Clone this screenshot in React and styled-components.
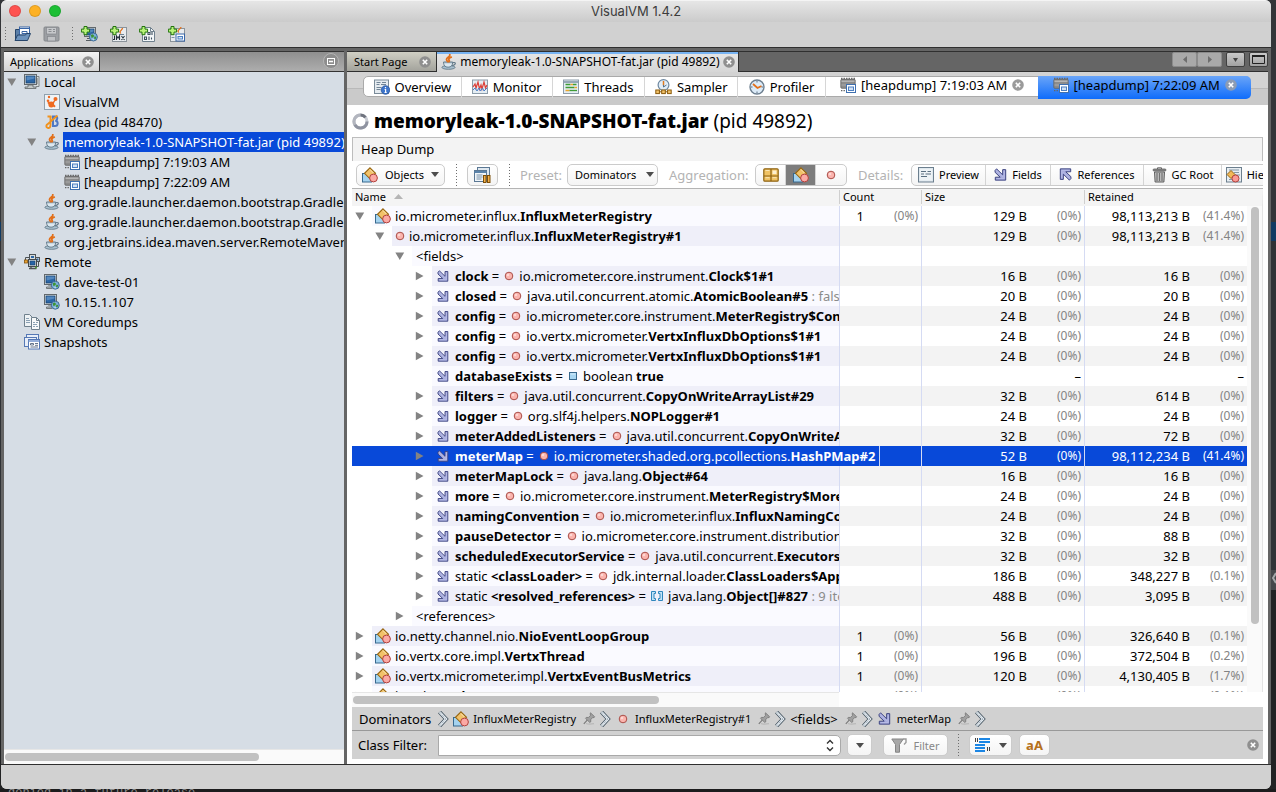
import React from "react";
import styled, { createGlobalStyle, css } from "styled-components";

const GlobalStyle = createGlobalStyle`
  * { box-sizing: border-box; }
  html, body { margin: 0; padding: 0; }
  body {
    font-family: "Noto Sans", "Open Sans", sans-serif;
    font-size: 12px;
    color: #000;
    background: #1b1b1c;
  }
  button, input, select { font: inherit; color: inherit; margin: 0; }
  button { cursor: default; }
`;

/* ---------- icons ---------- */

const Svg = styled.svg`
  display: block;
  flex: none;
`;

const CupIcon = () => (
  <Svg width="16" height="16" viewBox="0 0 16 16">
    <ellipse cx="7.5" cy="13.4" rx="6.6" ry="1.9" fill="#a9c0cf" stroke="#5d7383" strokeWidth=".8" />
    <path d="M2.5 8h9.2c0 3.4-1.6 5.2-4.6 5.2S2.500 11.400 2.500 8z" fill="#dbe8f0" stroke="#5d7686" strokeWidth=".9" />
    <path d="M3.200 8.500h7.800" stroke="#8aa0b0" strokeWidth="1.400" />
    <path d="M11.700 8.700c2.200-.7 3 .4 2.500 1.400-.5 1-1.800 1.400-3 1.500" fill="none" stroke="#5d7686" strokeWidth="1.100" />
    <path d="M8.800.6c.5 2.200-3.300 2.700-3.300 4.800 0 .9.600 1.500 1.200 2.100M10.200 3.200C8.200 4 7.300 4.900 8 6c.4.600.4 1 .1 1.600" fill="none" stroke="#e2701b" strokeWidth="1.800" strokeLinecap="round" />
  </Svg>
);

const Screen = ({ x = 0, y = 0, w = 11, h = 9 }) => (
  <g>
    <rect x={x + 0.5} y={y + 0.5} width={w} height={h} fill="#e3e7e7" stroke="#62686c" />
    <rect x={x + 2} y={y + 2} width={w - 3} height={h - 3} fill="#2c66a5" stroke="#173f6c" strokeWidth=".8" />
    <path d={`M${x + 2.500} ${y + 2.500}h${w - 4}v2l-${w - 4} 2z`} fill="#6f9fd0" opacity=".6" />
  </g>
);

const HostIcon = () => (
  <Svg width="16" height="16" viewBox="0 0 16 16">
    <path d="M10 2.500h5v10H12" fill="#d9dddd" stroke="#7d8284" />
    <path d="M13 5h1M13 7h1M13 9h1" stroke="#777" />
    <Screen x={0} y={0} w={12} h={10} />
    <path d="M4 11h5v2h3v1.500H1V13h3z" fill="#c4c9c9" stroke="#5e6467" strokeWidth=".8" />
  </Svg>
);

const Globe = ({ x, y, r = 4 }) => (
  <g>
    <circle cx={x} cy={y} r={r} fill="#7db0dc" stroke="#38648f" strokeWidth=".9" />
    <path d={`M${x - 2.500} ${y - 2}l2-.8 1.300 1.600-1 1.600-1.800.3zM${x + 1} ${y - 0.500}l2 .3-.9 2.600-1.400-.9z`} fill="#3f9434" />
    <path d={`M${x - 1} ${y + 1.500}l1.500.5-.8 1.500z`} fill="#e9f5e4" />
  </g>
);

const RemoteHostIcon = () => (
  <Svg width="16" height="16" viewBox="0 0 16 16">
    <Screen x={0} y={0} w={12} h={10} />
    <path d="M4 11h4v2H2.500v1.500H8" fill="#bfc4c4" stroke="#5e6467" strokeWidth=".8" />
    <Globe x={11.3} y={11.200} />
  </Svg>
);

const RemoteIcon = () => (
  <Svg width="16" height="16" viewBox="0 0 16 16">
    <path d="M1.500 6V3.500H5M14.500 8v4.500H11" fill="none" stroke="#4b5256" />
    <rect x="0.500" y="6" width="3" height="3" fill="#e6a233" stroke="#85530e" strokeWidth=".8" />
    <rect x="5.500" y=".5" width="6" height="5" fill="#d7dcdc" stroke="#4d5357" />
    <rect x="7" y="2" width="3" height="2" fill="#2c66a5" />
    <rect x="11.500" y="3.500" width="4" height="4" fill="#d7dcdc" stroke="#4d5357" />
    <rect x="12.500" y="4.500" width="2" height="2" fill="#2c66a5" />
    <rect x="4.500" y="5.500" width="8" height="7" fill="#d7dcdc" stroke="#444a4e" />
    <rect x="6" y="7" width="5" height="4" fill="#2864a6" stroke="#173f6c" strokeWidth=".6" />
    <path d="M5 14.500h7.500M7 13v1.500" stroke="#4d5357" strokeWidth="1.400" />
    <path d="M11 13.500h2" stroke="#54a338" strokeWidth="1.400" />
  </Svg>
);

const VisualVmIcon = () => (
  <Svg width="16" height="16" viewBox="0 0 16 16">
    <rect x=".5" y=".5" width="15" height="15" fill="#eef3f7" stroke="#8fa0ae" />
    <g fill="#ee6a22">
      <circle cx="5" cy="3" r="1.200" /><circle cx="4" cy="6.800" r="1.300" /><circle cx="11.500" cy="5" r="2" />
      <circle cx="7.300" cy="10.500" r="2.900" /><circle cx="4.800" cy="8.800" r="1.200" />
      <path d="M8.500 8.500l2.500-3.200.8.600-2 3.600z" /><circle cx="10.300" cy="12.200" r="1.100" />
    </g>
  </Svg>
);

const IdeaIcon = () => (
  <Svg width="16" height="16" viewBox="0 0 16 16">
    <path d="M9 2.500h2.300c2.600 0 2.600 3.600 0 4.200 3.200.2 3.200 5.300-.3 5.300H9z" fill="none" stroke="#4e78c4" strokeWidth="2" />
    <path d="M6.500 2.500v8.500c0 2.400-1.200 3.400-2.800 2.900-1.900-.6-1.900-3.100.2-3.900L13.500 1.500" fill="none" stroke="#f0921e" strokeWidth="1.900" />
    <path d="M3.500 2.500h4" stroke="#f0921e" strokeWidth="1.800" />
  </Svg>
);

const HeapIcon = () => (
  <Svg width="16" height="16" viewBox="0 0 16 16">
    <path d="M1 2V.8h1.500V2h1V.8H5V2h1V.8h1.500V2h1V.8H10V2h1V.8h1.500V2h1V.8H15V3H1z" fill="#6c6c6c" />
    <rect x=".8" y="2.300" width="14.400" height="9" rx="1" fill="#8c8c8c" stroke="#666" strokeWidth=".8" />
    <path d="M1.500 4.200h13" stroke="#c8c8c8" />
    <path d="M1.500 8h6" stroke="#aaa" />
    <path d="M1 13h1.400v1.200H1zM3.500 13h1.400v1.200H3.500z" fill="#666" />
    <rect x="6.500" y="7.500" width="9" height="8" fill="#fff" stroke="#3f6fae" />
    <rect x="8.500" y="10" width="5" height="3.500" fill="#cfe0f4" stroke="#4c7fc2" />
  </Svg>
);

const DocsIcon = () => (
  <Svg width="16" height="16" viewBox="0 0 16 16">
    <path d="M.5.5h5l3 3v9h-8z" fill="#eef2f5" stroke="#6f808d" />
    <path d="M2 4.500h3M2 6.500h4M2 8.500h4" stroke="#8ba1b4" />
    <path d="M7.500 3.500h5l3 3v9h-8z" fill="#f7f9fa" stroke="#6f808d" />
    <path d="M12.500 3.500v3h3" fill="none" stroke="#6f808d" />
    <path d="M9 8.500h2M12 8.500h2M9 10.500h4M9 12.500h2M12 12.500h2" stroke="#8ba1b4" />
  </Svg>
);

const SnapshotsIcon = () => (
  <Svg width="16" height="16" viewBox="0 0 16 16">
    <rect x="2.500" y=".5" width="12" height="9" fill="#e8eef8" stroke="#5578b5" />
    <rect x=".5" y="3.500" width="12" height="9" fill="#e8eef8" stroke="#5578b5" />
    <rect x="4.500" y="5.500" width="11" height="9.500" fill="#fff" stroke="#5578b5" />
    <path d="M4.500 7h11" stroke="#7c9bd1" strokeWidth="1.600" />
    <path d="M6.500 9.500h3v1.500h-3zM11 9.500h3M6.500 13h7.500M11 11.300h3" fill="none" stroke="#54657f" strokeWidth=".9" />
  </Svg>
);

const ClassIcon = () => (
  <Svg width="16" height="16" viewBox="0 0 16 16">
    <rect x=".5" y="6.500" width="9" height="8.500" fill="#a5d3ef" stroke="#38698e" />
    <path d="M8 .8L13.500 6.300 8 11.800 2.500 6.300z" fill="#f2c269" stroke="#97650f" strokeWidth="1.100" />
    <path d="M8 2.500l3.500 3.600" stroke="#fbe5b6" strokeWidth="1" />
    <circle cx="11.500" cy="11" r="3.900" fill="#fba9a4" stroke="#b0423e" strokeWidth="1" />
  </Svg>
);

const InstanceIcon = () => (
  <Svg width="10" height="10" viewBox="0 0 10 10">
    <circle cx="5" cy="5" r="3.800" fill="#fbb4ae" stroke="#a94d47" strokeWidth="1" />
    <circle cx="4" cy="4" r="1.300" fill="#fdd8d4" />
  </Svg>
);

const PrimitiveIcon = () => (
  <Svg width="10" height="10" viewBox="0 0 10 10">
    <rect x="1.500" y="1.500" width="7" height="7" fill="#a9d6f2" stroke="#38698e" />
    <path d="M2.500 3h5" stroke="#d6edfa" />
  </Svg>
);

const ArrayIcon = () => (
  <Svg width="12" height="12" viewBox="0 0 12 12">
    <path d="M.5 1.500h4v2H3v5h1.500v2h-4zM11.500 1.500h-4v2H9v5H7.500v2h4z" fill="#c2e2f7" stroke="#2f86bd" />
  </Svg>
);

const FieldIcon = ({ size = 12, flip }) => (
  <Svg width={size} height={size} viewBox="0 0 12 12">
    <g transform={flip ? "rotate(180 6 6)" : undefined}>
      <path d="M1 2.200L2.400.8 8 6.300V1.500h2.800v9.700H1.200V8.500h4.500L1 4z" fill="#a9aede" stroke="#3a417e" strokeWidth=".9" strokeLinejoin="round" />
      <path d="M2.600 2.400L8.600 8.400M3 9.800h6.400V3" fill="none" stroke="#bcc0ea" strokeWidth=".7" />
    </g>
  </Svg>
);

const PinIcon = () => (
  <Svg width="13" height="13" viewBox="0 0 13 13">
    <path d="M3 11.500c2 .8 5 .7 8 .2" stroke="#b9b9b9" strokeWidth="1.200" fill="none" />
    <path d="M.8 11.800l3.400-3.600" stroke="#777" strokeWidth="1.100" />
    <path d="M7.500.8l4.200 4-.8.9-1.200-.2-2 2.200.1 2-1 .8L2.500 6.300l.9-.9 2 .1 2.100-2.100-.3-1.500z" fill="#a0a0a0" stroke="#747474" strokeWidth=".8" />
  </Svg>
);

const ChevronIcon = () => (
  <Svg width="11" height="16" viewBox="0 0 11 16">
    <path d="M1.500 1l6.500 7-6.500 7" fill="none" stroke="#445460" strokeWidth="4" />
    <path d="M1.500 1l6.500 7-6.500 7" fill="none" stroke="#e9eff4" strokeWidth="2.400" />
    <path d="M1.500 1l6.500 7-6.500 7" fill="none" stroke="#6d8292" strokeWidth=".8" strokeDasharray="1 1" />
  </Svg>
);

const CloseIcon = ({ size = 12, fill = "#8f8f8f" }) => (
  <Svg width={size} height={size} viewBox="0 0 12 12">
    <circle cx="6" cy="6" r="5.800" fill={fill} />
    <path d="M3.800 3.800l4.400 4.400M8.200 3.800l-4.400 4.400" stroke="#fff" strokeWidth="1.600" />
  </Svg>
);

const Triangle = ({ open, color = "#838383" }) => (
  <Svg width="10" height="10" viewBox="0 0 10 10">
    <path d={open ? "M.3 1.500h8.900L4.800 9z" : "M.8.800v8.400L8.500 5z"} fill={color} />
  </Svg>
);

const DownIcon = ({ color = "#4d4d4d" }) => (
  <Svg width="8" height="5" viewBox="0 0 8 5"><path d="M0 0h8L4 5z" fill={color} /></Svg>
);

const OpenIcon = () => (
  <Svg width="17" height="16" viewBox="0 0 17 16">
    <path d="M1.500 14V3.500h5V8" fill="#5b7fa8" stroke="#27456a" />
    <rect x="5.500" y="1" width="10" height="8" fill="#fff" stroke="#3a66a6" />
    <path d="M5.500 2.500h10M8 5.500h5v2H8z" fill="none" stroke="#3a66a6" />
    <path d="M1 14.500L3.500 9h8l1-1.500h4L13.500 14.500z" fill="#6d93bd" stroke="#27456a" />
  </Svg>
);

const SaveIcon = () => (
  <Svg width="17" height="16" viewBox="0 0 17 16">
    <rect x="1" y="1" width="15" height="14" rx="1" fill="#9c9fa3" stroke="#85888c" />
    <rect x="3.500" y="1.500" width="10" height="6.500" fill="#c6c8cb" stroke="#85888c" strokeWidth=".7" />
    <path d="M5.500 3.500h3M10 3.500h2M5.500 5.500h3M10 5.500h2" stroke="#8a8d91" />
    <rect x="4.500" y="10.500" width="8" height="4.500" fill="#c0c2c5" stroke="#85888c" strokeWidth=".7" />
  </Svg>
);

const Plus = () => (
  <path d="M3 .5h3v2.600h2.600v3H6v2.600H3V6.100H.4v-3H3z" fill="#b9f27a" stroke="#23750e" strokeWidth="1" />
);

const AddHostIcon = () => (
  <Svg width="17" height="16" viewBox="0 0 17 16">
    <Screen x={3} y={1} w={11} h={9} />
    <path d="M6 12.500h5M5 14.500h5" stroke="#555b5f" />
    <Globe x={12.4} y={11} r={4} />
    <Plus />
  </Svg>
);

const AddJmxIcon = () => (
  <Svg width="17" height="16" viewBox="0 0 17 16">
    <rect x="2.500" y="1.500" width="14" height="14" fill="#e9ecef" stroke="#8b939a" />
    <path d="M12.500 2c0 2-2.500 2.300-2.500 4 0 .8.500 1 .8 1.500" fill="none" stroke="#e2701b" strokeWidth="1.300" />
    <path d="M9 8.500h5" stroke="#6d8292" />
    <path d="M4.500 9.500v4H3M6.500 14V10l1.500 2L9.500 10v4M11.500 10l3 4M14.500 10l-3 4" fill="none" stroke="#24303a" strokeWidth="1.100" />
    <Plus />
  </Svg>
);

const AddDumpIcon = () => (
  <Svg width="17" height="16" viewBox="0 0 17 16">
    <path d="M3.500 1.500h8l4 4v10h-12z" fill="#f3f6f8" stroke="#6f808d" />
    <path d="M11.500 1.500v4h4" fill="none" stroke="#6f808d" />
    <path d="M9 6.500h2v2H9zM13 6v3M5.500 11h2v2.500h-2zM10 10.500v3.500M12.500 11.500v2" fill="none" stroke="#3f5060" strokeWidth="1.100" />
    <Plus />
  </Svg>
);

const AddSnapIcon = () => (
  <Svg width="17" height="16" viewBox="0 0 17 16">
    <rect x="2.500" y="2.500" width="14" height="13" fill="#e9ecef" stroke="#8b939a" />
    <path d="M13 1c0 2-3 2.300-3 4 0 .8.500 1 .8 1.500" fill="none" stroke="#e2701b" strokeWidth="1.300" />
    <rect x="8" y="8" width="8.500" height="7" fill="#fff" stroke="#3a66a6" />
    <rect x="10" y="10.500" width="4.500" height="2.500" fill="#cfe0f4" stroke="#4c7fc2" />
    <path d="M3.500 8.500h3M3.500 11.500h3" stroke="#7e93a5" />
    <Plus />
  </Svg>
);

const OverviewIcon = () => (
  <Svg width="16" height="16" viewBox="0 0 16 16">
    <rect x=".5" y="1" width="14" height="13.500" fill="#e5ebf0" stroke="#7a8b99" />
    <path d="M2.500 3.500h4M8 3.500h4M2.500 5.500h3M7 5.500h5M2.500 8.500h5M2.500 10.500h4" stroke="#62788b" strokeWidth=".9" />
    <circle cx="11.500" cy="11" r="4.300" fill="#3c74cb" stroke="#1e4c97" strokeWidth=".7" />
    <path d="M11.500 8v1.300M10.600 10.500h1v3M10.500 13.500h2.200" stroke="#fff" strokeWidth="1.200" fill="none" />
  </Svg>
);

const MonitorIcon = () => (
  <Svg width="16" height="16" viewBox="0 0 16 16">
    <rect x=".5" y="1" width="15" height="13.500" fill="#e4edf3" stroke="#8b9caa" />
    <path d="M1 8l2-3 1 4 2-6 1.500 7L9 6l1 4 2-7 1.500 6L15 6" fill="none" stroke="#dd4038" strokeWidth="1.200" />
    <path d="M1 11l2-2 2 3 2-3 1.500 3 2-3 1.500 3 3-3" fill="none" stroke="#4b7ec6" strokeWidth="1" />
  </Svg>
);

const ThreadsIcon = () => (
  <Svg width="16" height="16" viewBox="0 0 16 16">
    <rect x=".5" y="1" width="15" height="13.500" fill="#e4edf3" stroke="#8b9caa" />
    <path d="M1 3h14" stroke="#8297a8" strokeWidth="1.600" />
    <path d="M2.500 5.500h5M10 5.500h3.500M2.500 8.500h9" stroke="#3f9c35" strokeWidth="1.300" />
    <path d="M7.500 5.500h2.500M11.500 8.500h2.500M2.500 11.500h4" stroke="#eca62c" strokeWidth="1.300" />
    <path d="M6.500 11.500h7.500" stroke="#3f9c35" strokeWidth="1.300" />
  </Svg>
);

const SamplerIcon = () => (
  <Svg width="17" height="16" viewBox="0 0 17 16">
    <circle cx="8.500" cy="6" r="5.400" fill="#e1edf7" stroke="#6d87a0" strokeWidth="1.200" />
    <path d="M8.500 2v4.500" stroke="#e07b20" strokeWidth="1.500" />
    <path d="M8.500 6v2l3-2" stroke="#55718d" fill="none" />
    <g fill="#f2c269" stroke="#8a5a0b"><rect x=".8" y="11" width="3.600" height="3.600" /><rect x="6.700" y="11" width="3.600" height="3.600" /><rect x="12.600" y="11" width="3.600" height="3.600" /></g>
    <path d="M4.400 12.800h2.300M10.300 12.800h2.300" stroke="#8a5a0b" />
  </Svg>
);

const ProfilerIcon = () => (
  <Svg width="16" height="16" viewBox="0 0 16 16">
    <circle cx="8" cy="8" r="7" fill="#dcebf8" stroke="#6d7f90" strokeWidth="1.400" />
    <path d="M4 5l4.500 4 4-2" fill="none" stroke="#e2701b" strokeWidth="1.800" />
    <path d="M8 2v1.500M8 12.500V14M2 8h1.500M12.500 8H14" stroke="#5a6f84" />
  </Svg>
);

const SpinnerIcon = () => (
  <Svg width="17" height="17" viewBox="0 0 17 17">
    <circle cx="8.500" cy="8.500" r="6.500" fill="none" stroke="#c9ccd3" strokeWidth="3" />
    <path d="M8.500 2a6.500 6.500 0 0 0-5.600 9.800" fill="none" stroke="#b3b6bf" strokeWidth="3" />
    <path d="M2.900 11.800A6.500 6.500 0 0 0 15 8.500" fill="none" stroke="#8f93a0" strokeWidth="3" />
    <path d="M8.500 2a6.500 6.500 0 0 1 5 2.400" fill="none" stroke="#70747f" strokeWidth="3" />
  </Svg>
);

const WindowsIcon = () => (
  <Svg width="17" height="16" viewBox="0 0 17 16">
    <rect x="3.500" y=".5" width="12" height="10" fill="#dfe8f0" stroke="#5b7894" />
    <rect x=".5" y="3.500" width="12" height="11" fill="#f0f5f9" stroke="#5b7894" />
    <path d="M.5 5h12" stroke="#5b83aa" strokeWidth="2" />
    <path d="M2.500 8h6M2.500 10h6M2.500 12h5" stroke="#7790a8" />
    <rect x="9.500" y="8.500" width="2.500" height="7" fill="#f2b04a" stroke="#7d4e07" />
    <rect x="13.500" y="8.500" width="2.500" height="7" fill="#f2b04a" stroke="#7d4e07" />
  </Svg>
);

const PackagesIcon = () => (
  <Svg width="16" height="14" viewBox="0 0 16 14">
    <rect x=".8" y=".8" width="14.400" height="12.400" rx="1" fill="#f0c365" stroke="#8d6210" strokeWidth="1.200" />
    <path d="M8 1v12M1 8h14" stroke="#8d6210" strokeWidth="1.200" />
    <path d="M2.500 2.500h4M2.500 9.700h4M9.500 9.700h4" stroke="#fae6b4" />
    <rect x="9.500" y="2.500" width="4" height="3.500" fill="#fdf0cf" />
  </Svg>
);

const PreviewIcon = () => (
  <Svg width="16" height="16" viewBox="0 0 16 16">
    <rect x=".5" y=".5" width="15" height="14.500" fill="#dfe8ee" stroke="#6c7f8e" />
    <rect x="2" y="2" width="12" height="11.500" fill="#edf2f5" />
    <path d="M3 4.500h5M9.500 4.500h3.500M3 7h3M7.500 7H13M3 9.500h6" stroke="#5a6f80" />
  </Svg>
);

const TrashIcon = () => (
  <Svg width="15" height="16" viewBox="0 0 15 16">
    <path d="M5.500 2V.8h4V2" fill="none" stroke="#666" />
    <rect x="1" y="2" width="13" height="2" rx="1" fill="#8b8b8b" stroke="#5d5d5d" strokeWidth=".8" />
    <path d="M2.500 5h10l-.6 10h-8.800z" fill="#c2c2c2" stroke="#5d5d5d" />
    <path d="M5 6v8M7.500 6v8M10 6v8" stroke="#717171" strokeWidth="1.200" />
  </Svg>
);

const HierarchyIcon = () => (
  <Svg width="16" height="16" viewBox="0 0 16 16">
    <rect x=".5" y=".5" width="15" height="14.500" fill="#e8eef2" stroke="#6c7f8e" />
    <path d="M3 3h10M8 5.500h5M9 8h5M3 12.500h3" stroke="#8497a6" />
    <path d="M5 3.500l4 4-4 4-4-4z" fill="#f2b857" stroke="#97650f" />
    <circle cx="9.500" cy="11.500" r="3.500" fill="#fb9a94" stroke="#b0423e" />
  </Svg>
);

const FunnelIcon = () => (
  <Svg width="17" height="15" viewBox="0 0 17 15">
    <path d="M.8 1h11.500L8.500 6.500v7.700h-4V6.500z" fill="#a8a8a8" stroke="#858585" />
    <path d="M12 1h3v3.500l-2 2" fill="none" stroke="#999" strokeWidth="1.400" />
  </Svg>
);

const LinesIcon = () => (
  <Svg width="17" height="14" viewBox="0 0 17 14">
    <path d="M5 1h11M5 4h11M1 7h10M1 10h10M1 13h10" stroke="#1c86e4" strokeWidth="2" />
    <path d="M1.500 0v4M3.500 0v4M13.500 9v4M15.500 9v4" stroke="#444" />
  </Svg>
);

/* ---------- window frame ---------- */

const Desktop = styled.div`
  position: relative;
  height: 100vh;
  overflow: hidden;
  display: flex;
  flex-direction: column;
  padding: 0 5px 0 1px;
  background: linear-gradient(#333538 0 222px, #113a62 222px 241px, #303235 241px 570px, #45484b 570px 590px, #222324 590px);
`;

const Terminal = styled.div`
  flex: none;
  height: 3px;
  margin: 0 -5px 0 -1px;
  padding-left: 8px;
  overflow: hidden;
  background: #1c1c1d;
  color: #8c8c8c;
  font: 12px/9px "Liberation Mono", monospace;
`;

const WindowFrame = styled.div`
  flex: 1;
  min-height: 0;
  display: flex;
  flex-direction: column;
  border-radius: 6px;
  overflow: hidden;
  background: #d1d1d1;
`;

const TitleBar = styled.header`
  flex: none;
  height: 22px;
  display: grid;
  grid-template-columns: 1fr auto 1fr;
  align-items: center;
  padding: 0 8px 2px;
  background: linear-gradient(#e6e6e6, #cbcbcb);
  border-top: 1px solid #f4f4f4;
  font: 13px/18px Inter, sans-serif;
  color: #3c3c3c;
`;

const Lights = styled.div`
  display: flex;
  gap: 8px;
`;

const Light = styled.button`
  width: 12px;
  height: 12px;
  padding: 0;
  border: 1px solid rgba(0, 0, 0, 0.12);
  border-radius: 50%;
  background: ${(p) => p.$color};
`;

const MainToolbar = styled.div`
  flex: none;
  height: 25px;
  display: flex;
  align-items: center;
  padding: 0 4px 2px;
`;

const ToolButton = styled.button`
  display: flex;
  padding: 0;
  border: 0;
  background: none;
  margin-right: 12px;
`;

const Dots = styled.span`
  flex: none;
  width: 1px;
  height: ${(p) => p.$h || 14}px;
  background: repeating-linear-gradient(#6e6e6e 0 1px, transparent 1px 3px);
`;

const Main = styled.main`
  flex: 1;
  min-height: 0;
  display: grid;
  grid-template-columns: 340px minmax(0, 1fr);
  gap: 3px;
  padding: 3px 3px 0;
  border-top: 1px solid #2f2f2f;
  border-bottom: 1px solid #2f2f2f;
  background: #656565;
`;

const StatusBar = styled.footer`
  flex: none;
  height: 24px;
  background: #d1d1d1;
`;

/* ---------- left panel ---------- */

const Panel = styled.section`
  min-width: 0;
  min-height: 0;
  display: flex;
  flex-direction: column;
`;

const DockBar = styled.div`
  flex: none;
  height: 21px;
  display: flex;
  align-items: stretch;
  border-top: 1px solid #333;
  border-bottom: 1px solid #333;
  background: linear-gradient(#8f8f8f, #adadad);
`;

const DockTab = styled.div`
  display: flex;
  align-items: center;
  gap: 9px;
  width: 96px;
  padding-left: 6px;
  font-size: 11px;
  line-height: 18px;
  background: linear-gradient(#f2f2f2, #d4d4d4);
  border-right: 1px solid #333;
`;

const IconButton = styled.button`
  display: flex;
  padding: 0;
  border: 0;
  background: none;
`;

const MinimizeButton = styled(IconButton)`
  margin: 1px 5px 0 auto;
  width: 16px;
  height: 16px;
  align-items: center;
  justify-content: center;
  border-radius: 50%;
  border: 1px solid #b4b4b4;
  background: #8d8d8d;
`;

const TreeView = styled.ul`
  flex: 1;
  min-height: 0;
  margin: 0;
  padding: 0;
  list-style: none;
  overflow: hidden;
  background: #d6dde5;
`;

const TreeItem = styled.li`
  display: flex;
  align-items: center;
  height: 20px;
  padding-left: ${(p) => p.$level * 20}px;
  white-space: nowrap;
`;

const Toggle = styled.span`
  flex: none;
  display: flex;
  width: 20px;
  padding-left: 3px;
`;

const TreeLabel = styled.span`
  flex: ${(p) => (p.$selected ? 1 : "none")};
  margin-left: 3px;
  padding-left: 1px;
  font-size: 13px;
  line-height: 20px;
  ${(p) => p.$selected && css`background: #0849d9; color: #fff; overflow: hidden;`}
`;

const HScroll = styled.div`
  flex: none;
  height: 15px;
  padding: 3px 1px;
  background: #fafafa;
  border-top: 1px solid #e6e6e6;
`;

const Thumb = styled.div`
  width: ${(p) => p.$w};
  height: 8px;
  border-radius: 4px;
  background: #c1c1c1;
`;

/* ---------- right panel ---------- */

const EditorBar = styled.div`
  flex: none;
  height: 21px;
  display: flex;
  border-top: 1px solid #2f2f2f;
  border-bottom: 1px solid #2f2f2f;
`;

const EditorTab = styled.div`
  flex: none;
  display: flex;
  align-items: center;
  padding: 0 5px 0 7px;
  gap: 12px;
  font-size: 11px;
  line-height: 18px;
  white-space: nowrap;
  border-right: 1px solid #2f2f2f;
  background: linear-gradient(#d0cfc4, #a3a39c);
  ${(p) => p.$active && css`
    gap: 3px;
    margin-bottom: -1px;
    padding: 0 3px 0 4px;
    font-size: 12px;
    background: linear-gradient(#e6e6e6, #d6d6d6);
    box-shadow: inset 0 2px #77b3f2;
  `}
`;

const EditorTools = styled.div`
  display: flex;
  gap: 4px;
  margin-left: auto;
`;

const Pair = styled.div`
  display: flex;
`;

const NavButton = styled.button`
  width: ${(p) => p.$w || 19}px;
  height: 15px;
  padding: 0;
  display: flex;
  align-items: center;
  justify-content: center;
  border: 1px solid ${(p) => (p.disabled ? "#8b8b8b" : "#3f3f3f")};
  border-radius: 2px;
  background: ${(p) => (p.disabled ? "#a9a9a9" : "linear-gradient(#c9c9c9, #a2a2a2)")};
`;

const Document = styled.div`
  flex: 1;
  min-height: 0;
  display: flex;
  flex-direction: column;
  background: #fff;
`;

const ViewBar = styled.nav`
  flex: none;
  height: 33px;
  padding: 4px 17px 8px 16px;
  background: linear-gradient(#d3d3d3 0 16px, #b9b9b9 16px 17px, #cacaca 17px);
`;

const ViewTabs = styled.div`
  height: 21px;
  display: grid;
  grid-template-columns: 98fr 91fr 93fr 93fr 88fr 214fr 211fr;
  border: 1px solid #aaa;
  border-radius: 5px;
  background: #fff;
`;

const ViewTab = styled.button`
  min-width: 0;
  display: flex;
  align-items: center;
  justify-content: center;
  gap: 5px;
  padding: 0 0 ${(p) => (p.$closable ? 5 : 2)}px;
  border: 0;
  border-right: 1px solid ${(p) => (p.$closable ? "transparent" : "#d6d6d6")};
  background: none;
  font-size: 13px;
  line-height: 16px;
  white-space: nowrap;
  ${(p) => p.$selected && css`
    margin: -1px;
    border: 0;
    border-radius: 0 5px 5px 0;
    background: linear-gradient(#6aa5f8, #0f6cfb);
  `}
`;

const PageTitle = styled.h1`
  flex: none;
  display: flex;
  align-items: center;
  gap: 5px;
  height: 32px;
  margin: 0;
  padding-left: 5px;
  font-size: 19px;
  line-height: 32px;
  white-space: pre;
  & > span { font-weight: 400; }
`;

const Body = styled.div`
  flex: 1;
  min-height: 0;
  margin: 0 5px 5px;
  display: flex;
  flex-direction: column;
`;

const SectionHeading = styled.h2`
  flex: none;
  height: 24px;
  margin: 0;
  padding-left: 8px;
  border: 1px solid #bdbdbd;
  border-bottom: 0;
  background: #f3f3f3;
  font-size: 13px;
  font-weight: 400;
  line-height: 23px;
`;

const Toolbar = styled.div`
  flex: none;
  height: 28px;
  display: flex;
  align-items: center;
  padding-left: 4px;
  overflow: hidden;
  white-space: nowrap;
  border-bottom: 1px solid #b4b4b4;
`;

const raised = css`
  border: 1px solid #cbcbcb;
  border-radius: 5px;
  background: linear-gradient(#fff, #f4f4f4);
`;

const PushButton = styled.button`
  ${raised}
  flex: none;
  height: 22px;
  width: ${(p) => p.$w}px;
  display: flex;
  align-items: center;
  justify-content: center;
  gap: ${(p) => p.$gap || 6}px;
  padding: 0;
  font-size: 11px;
  color: ${(p) => (p.disabled ? "#888" : "#000")};
`;

const PresetBox = styled.span`
  ${raised}
  flex: none;
  display: flex;
  align-items: center;
  width: 91px;
  height: 22px;
  padding-right: 3px;
`;

const PresetSelect = styled.select`
  flex: 1;
  min-width: 0;
  padding: 0 0 0 7px;
  border: 0;
  background: none;
  appearance: none;
  font-size: 11px;
`;

const ToolLabel = styled.label`
  flex: none;
  width: ${(p) => p.$w}px;
  padding-left: ${(p) => (p.$first ? 0 : 11)}px;
  font-size: 13px;
  color: #b3b3b3;
`;

const Segments = styled.div`
  ${raised}
  flex: none;
  height: 22px;
  display: flex;
  overflow: hidden;
`;

const Segment = styled.button`
  flex: none;
  width: ${(p) => p.$w}px;
  padding: 0;
  display: flex;
  align-items: center;
  justify-content: center;
  gap: 5px;
  border: 0;
  border-right: 1px solid #d4d4d4;
  background: ${(p) => (p.$on ? "#7d7d7d" : "none")};
  font-size: 11px;
  &:last-child { border-right: 0; }
`;

const SepGap = styled.span`
  flex: none;
  display: flex;
  justify-content: center;
  width: 22px;
`;

/* ---------- data table ---------- */

const TableArea = styled.div`
  flex: 1;
  min-height: 0;
  display: grid;
  grid-template-columns: minmax(0, 1fr) 16px;
  overflow: hidden;
`;

const TableClip = styled.div`
  min-height: 0;
  overflow: hidden;
`;

const Table = styled.table`
  width: 100%;
  table-layout: fixed;
  border-collapse: separate;
  border-spacing: 0;
`;

const Th = styled.th`
  height: 17px;
  padding: 0 0 2px 3px;
  background: #f4f4f4;
  font-size: 11px;
  font-weight: 400;
  line-height: 14px;
  text-align: left;
  & > span {
    display: flex;
    align-items: center;
    gap: 8px;
    margin-left: -3px;
    padding-left: 3px;
    border-left: ${(p) => (p.$first ? 0 : 1)}px solid #cfcfcf;
  }
`;

const Tr = styled.tr`
  height: 20px;
  background: ${(p) => (p.$selected ? "#0849d9" : p.$odd ? "#f3f3f3" : "#fff")};
  color: ${(p) => (p.$selected ? "#fff" : "#000")};
  --name: ${(p) => (p.$selected ? "#0849d9" : p.$odd ? "#efeff9" : "#fafaff")};
  --indent: ${(p) => (p.$selected ? "#0849d9" : "#fff")};
  --pct: ${(p) => (p.$selected ? "#fff" : "#838383")};
`;

const NameTd = styled.td`
  position: relative;
  height: 20px;
  padding: 0;
  background: var(--indent);
`;

const NameFlow = styled.div`
  display: flex;
  align-items: center;
  height: 20px;
  padding-left: ${(p) => p.$level * 20}px;
  ${(p) => !p.$selected && css`overflow: hidden;`}
`;

const NameContent = styled.div`
  flex: ${(p) => (p.$selected ? "none" : 1)};
  min-width: ${(p) => (p.$selected ? "max-content" : 0)};
  height: 20px;
  display: flex;
  align-items: center;
  gap: ${(p) => (p.$field ? 5 : 4)}px;
  padding: 0 4px 0 ${(p) => p.$pad}px;
  background: var(--name);
  font-size: 13px;
  line-height: 20px;
  white-space: nowrap;
  overflow: hidden;
  ${(p) => p.$selected && css`position: relative; z-index: 1; border-right: 1px solid #c9d7f6;`}
  & > svg:first-child { margin-right: ${(p) => (p.$field ? 1 : 0)}px; }
`;

const Grey = styled.span`
  color: #8a8a8a;
`;

const Num = styled.td`
  height: 20px;
  padding: 0;
  border-left: 1px solid #d5dbf3;
  font-size: 13px;
  line-height: 20px;
`;

const NumFlow = styled.div`
  display: grid;
  grid-template-columns: minmax(0, 1fr) ${(p) => p.$pct}px;
  padding-right: 3px;
  text-align: right;
  white-space: nowrap;
  & > small { font-size: 12px; color: var(--pct); }
`;

const VTrack = styled.div`
  background: #fafafa;
  border-right: 1px solid #e4e4e4;
  border-top: 17px solid #f4f4f4;
  padding: 1px 3px 0 4px;
`;

const VThumb = styled.div`
  height: 86%;
  border-radius: 4px;
  background: #c1c1c1;
`;

const NameScroll = styled(HScroll)`
  width: 53.5%;
`;

const Crumbs = styled.nav`
  flex: none;
  height: 24px;
  display: flex;
  align-items: center;
  padding-left: 7px;
  gap: 4px;
  background: #d1d1d1;
  border-bottom: 1px solid #999;
  white-space: nowrap;
`;

const Crumb = styled.a`
  display: flex;
  align-items: center;
  gap: 4px;
  margin-right: 3px;
  color: #000;
  text-decoration: none;
  font-size: ${(p) => (p.$big ? 13 : 11)}px;
`;

const IconSlot = styled.span`
  flex: none;
  width: 16px;
  display: flex;
  justify-content: center;
`;

const FilterBar = styled.form`
  flex: none;
  height: 28px;
  display: flex;
  align-items: center;
  padding: 0 4px 0 6px;
  background: #d1d1d1;
`;

const FilterLabel = styled.label`
  flex: none;
  width: 80px;
  font-size: 13px;
`;

const Combo = styled.span`
  flex: 0 1 403px;
  display: flex;
  height: 21px;
  border: 1px solid #a9a9a9;
  border-radius: 0 5px 5px 0;
  background: #fff;
`;

const ComboInput = styled.input`
  flex: 1;
  min-width: 0;
  border: 0;
  outline: 0;
  background: none;
`;

const Spacer = styled.span`
  flex: none;
  width: ${(p) => p.$w}px;
`;

const FilterClose = styled(IconButton)`
  margin-left: auto;
`;

const CaseMark = styled.b`
  color: #b5701a;
  font-size: 13px;
`;

const EdgeMark = styled.svg`
  position: absolute;
  right: 0;
  top: 572px;
`;

/* ---------- data ---------- */

const tree = [
  { level: 0, open: true, icon: HostIcon, label: "Local" },
  { level: 1, icon: VisualVmIcon, label: "VisualVM" },
  { level: 1, icon: IdeaIcon, label: "Idea (pid 48470)" },
  { level: 1, open: true, icon: CupIcon, label: "memoryleak-1.0-SNAPSHOT-fat.jar (pid 49892)", selected: true },
  { level: 2, icon: HeapIcon, label: "[heapdump] 7:19:03 AM" },
  { level: 2, icon: HeapIcon, label: "[heapdump] 7:22:09 AM" },
  { level: 1, icon: CupIcon, label: "org.gradle.launcher.daemon.bootstrap.GradleDaemon" },
  { level: 1, icon: CupIcon, label: "org.gradle.launcher.daemon.bootstrap.GradleDaemon" },
  { level: 1, icon: CupIcon, label: "org.jetbrains.idea.maven.server.RemoteMavenServer" },
  { level: 0, open: true, icon: RemoteIcon, label: "Remote" },
  { level: 1, icon: RemoteHostIcon, label: "dave-test-01" },
  { level: 1, icon: RemoteHostIcon, label: "10.15.1.107" },
  { level: 0, icon: DocsIcon, label: "VM Coredumps" },
  { level: 0, icon: SnapshotsIcon, label: "Snapshots" },
];

const field = (name, pkg, cls, size, retained, extra = {}) => ({ kind: "field", level: 3, name, pkg, cls, size, retained, pct: "(0%)", ...extra });

const rows = [
  { kind: "class", level: 0, open: true, pkg: "io.micrometer.influx.", cls: "InfluxMeterRegistry", count: 1, size: "129 B", retained: "98,113,213 B", pct: "(41.4%)" },
  { kind: "instance", level: 1, open: true, pkg: "io.micrometer.influx.", cls: "InfluxMeterRegistry#1", size: "129 B", retained: "98,113,213 B", pct: "(41.4%)" },
  { kind: "group", level: 2, open: true, pkg: "<fields>" },
  field("clock", "io.micrometer.core.instrument.", "Clock$1#1", "16 B", "16 B"),
  field("closed", "java.util.concurrent.atomic.", "AtomicBoolean#5", "20 B", "20 B", { tail: ": false" }),
  field("config", "io.micrometer.core.instrument.", "MeterRegistry$Config#1", "24 B", "24 B"),
  field("config", "io.vertx.micrometer.", "VertxInfluxDbOptions$1#1", "24 B", "24 B"),
  field("config", "io.vertx.micrometer.", "VertxInfluxDbOptions$1#1", "24 B", "24 B"),
  field("databaseExists", "boolean ", "true", "–", "–", { leaf: true, pct: "", ref: PrimitiveIcon }),
  field("filters", "java.util.concurrent.", "CopyOnWriteArrayList#29", "32 B", "614 B"),
  field("logger", "org.slf4j.helpers.", "NOPLogger#1", "24 B", "24 B"),
  field("meterAddedListeners", "java.util.concurrent.", "CopyOnWriteArrayList#30", "32 B", "72 B"),
  field("meterMap", "io.micrometer.shaded.org.pcollections.", "HashPMap#2", "52 B", "98,112,234 B", { pct: "(41.4%)", selected: true }),
  field("meterMapLock", "java.lang.", "Object#64", "16 B", "16 B"),
  field("more", "io.micrometer.core.instrument.", "MeterRegistry$More#1", "24 B", "24 B"),
  field("namingConvention", "io.micrometer.influx.", "InfluxNamingConvention#1", "24 B", "24 B"),
  field("pauseDetector", "io.micrometer.core.instrument.distribution.pause.", "NoPauseDetector#1", "32 B", "88 B"),
  field("scheduledExecutorService", "java.util.concurrent.", "Executors$Delegated#1", "32 B", "32 B"),
  field("<classLoader>", "jdk.internal.loader.", "ClassLoaders$AppClassLoader#1", "186 B", "348,227 B", { isStatic: true, pct: "(0.1%)" }),
  field("<resolved_references>", "java.lang.", "Object[]#827", "488 B", "3,095 B", { isStatic: true, ref: ArrayIcon, tail: ": 9 items" }),
  { kind: "group", level: 2, pkg: "<references>" },
  { kind: "class", level: 0, pkg: "io.netty.channel.nio.", cls: "NioEventLoopGroup", count: 1, size: "56 B", retained: "326,640 B", pct: "(0.1%)" },
  { kind: "class", level: 0, pkg: "io.vertx.core.impl.", cls: "VertxThread", count: 1, size: "196 B", retained: "372,504 B", pct: "(0.2%)" },
  { kind: "class", level: 0, pkg: "io.vertx.micrometer.impl.", cls: "VertxEventBusMetrics", count: 1, size: "120 B", retained: "4,130,405 B", pct: "(1.7%)" },
  { kind: "class", level: 0, pkg: "java.lang.", cls: "Class", count: 6, size: "128 B", retained: "350,723 B", pct: "(0.1%)" },
];

function NameCell({ row }) {
  const Ref = row.ref || InstanceIcon;
  const isField = row.kind === "field";
  return (
    <NameTd>
      <NameFlow $level={row.level} $selected={row.selected}>
        <Toggle>{!row.leaf && <Triangle open={row.open} />}</Toggle>
        <NameContent $pad={isField ? 5 : row.kind === "group" ? 4 : 3} $field={isField} $selected={row.selected}>
          {isField && <FieldIcon />}
          {row.kind === "class" && <ClassIcon />}
          {row.kind === "instance" && <InstanceIcon />}
          {isField && <span>{row.isStatic && "static "}<b>{row.name}</b> =</span>}
          {isField && <Ref />}
          <span>{row.pkg}<b>{row.cls}</b>{row.tail && <Grey> {row.tail}</Grey>}</span>
        </NameContent>
      </NameFlow>
    </NameTd>
  );
}

function NumCell({ value, pct, width = 54 }) {
  return (
    <Num>
      {value !== undefined && (
        <NumFlow $pct={pct === "" ? 0 : width}><span>{value}</span><small>{pct}</small></NumFlow>
      )}
    </Num>
  );
}

function HeapTable() {
  return (
    <TableArea>
      <TableClip>
        <Table>
          <colgroup><col /><col style={{ width: 82 }} /><col style={{ width: 163 }} /><col style={{ width: 163 }} /></colgroup>
          <thead>
            <tr>
              <Th $first><span>Name<Svg width="9" height="5" viewBox="0 0 9 5"><path d="M0 5L4.500 0 9 5z" fill="#b5b5b5" /></Svg></span></Th>
              <Th><span>Count</span></Th>
              <Th><span>Size</span></Th>
              <Th><span>Retained</span></Th>
            </tr>
          </thead>
          <tbody>
            {rows.map((row, i) => (
              <Tr key={i} $odd={i % 2 === 1} $selected={row.selected}>
                <NameCell row={row} />
                <NumCell value={row.count} pct="(0%)" />
                <NumCell value={row.size} pct={row.pct === "" ? "" : "(0%)"} />
                <NumCell value={row.retained} pct={row.pct} />
              </Tr>
            ))}
          </tbody>
        </Table>
      </TableClip>
      <VTrack><VThumb /></VTrack>
    </TableArea>
  );
}

function Applications() {
  return (
    <Panel>
      <DockBar>
        <DockTab>Applications<IconButton aria-label="Close"><CloseIcon /></IconButton></DockTab>
        <MinimizeButton aria-label="Minimize">
          <Svg width="8" height="7" viewBox="0 0 8 7"><rect x=".5" y=".5" width="7" height="6" fill="none" stroke="#fff" /><path d="M2 3.500h4" stroke="#fff" strokeWidth="1.500" /></Svg>
        </MinimizeButton>
      </DockBar>
      <TreeView>
        {tree.map((n, i) => (
          <TreeItem key={i} $level={n.level}>
            <Toggle>{n.open && <Triangle open />}</Toggle>
            <n.icon />
            <TreeLabel $selected={n.selected}>{n.label}</TreeLabel>
          </TreeItem>
        ))}
      </TreeView>
      <HScroll><Thumb $w="75%" /></HScroll>
    </Panel>
  );
}

function Views() {
  const views = [
    [OverviewIcon, "Overview"], [MonitorIcon, "Monitor"], [ThreadsIcon, "Threads"], [SamplerIcon, "Sampler"], [ProfilerIcon, "Profiler"],
    [HeapIcon, "[heapdump] 7:19:03 AM", true], [HeapIcon, "[heapdump] 7:22:09 AM", true],
  ];
  return (
    <ViewBar>
      <ViewTabs>
        {views.map(([Icon, label, closable], i) => (
          <ViewTab key={i} $selected={i === 6} $closable={closable}>
            <Icon />{label}{closable && <CloseIcon fill={i === 6 ? "#8c9cb4" : "#9b9b9b"} />}
          </ViewTab>
        ))}
      </ViewTabs>
    </ViewBar>
  );
}

function HeapToolbar() {
  return (
    <Toolbar>
      <PushButton $w={89} $gap={7}><ClassIcon />Objects<DownIcon /></PushButton>
      <SepGap><Dots $h={22} /></SepGap>
      <PushButton $w={31} aria-label="Compare"><WindowsIcon /></PushButton>
      <SepGap><Dots $h={22} /></SepGap>
      <ToolLabel $first $w={47} htmlFor="preset">Preset:</ToolLabel>
      <PresetBox>
        <PresetSelect id="preset" defaultValue="Dominators"><option>Dominators</option></PresetSelect>
        <DownIcon />
      </PresetBox>
      <ToolLabel as="span" $w={97}>Aggregation:</ToolLabel>
      <Segments>
        <Segment $w={30} aria-label="Packages"><PackagesIcon /></Segment>
        <Segment $w={30} $on aria-label="Classes"><ClassIcon /></Segment>
        <Segment $w={30} aria-label="Instances"><InstanceIcon /></Segment>
      </Segments>
      <ToolLabel as="span" $w={64}>Details:</ToolLabel>
      <Segments>
        <Segment $w={74}><PreviewIcon />Preview</Segment>
        <Segment $w={65}><FieldIcon size={13} />Fields</Segment>
        <Segment $w={93}><FieldIcon size={13} flip />References</Segment>
        <Segment $w={78}><TrashIcon />GC Root</Segment>
        <Segment $w={78}><HierarchyIcon />Hierarchy</Segment>
      </Segments>
    </Toolbar>
  );
}

export default function App() {
  return (
    <>
      <GlobalStyle />
      <Desktop>
        <WindowFrame>
          <TitleBar>
            <Lights>
              <Light $color="#fe5350" aria-label="Close" />
              <Light $color="#fdb124" aria-label="Minimize" />
              <Light $color="#1dbf35" aria-label="Zoom" />
            </Lights>
            <span>VisualVM 1.4.2</span>
          </TitleBar>
          <MainToolbar>
            <Dots />
            <Spacer $w={8} />
            <ToolButton aria-label="Load"><OpenIcon /></ToolButton>
            <ToolButton aria-label="Save"><SaveIcon /></ToolButton>
            <Dots />
            <Spacer $w={8} />
            <ToolButton aria-label="Add remote host"><AddHostIcon /></ToolButton>
            <ToolButton aria-label="Add JMX connection"><AddJmxIcon /></ToolButton>
            <ToolButton aria-label="Add VM coredump"><AddDumpIcon /></ToolButton>
            <ToolButton aria-label="Add snapshot"><AddSnapIcon /></ToolButton>
          </MainToolbar>
          <Main>
            <Applications />
            <Panel>
              <EditorBar>
                <EditorTab>Start Page<IconButton aria-label="Close"><CloseIcon /></IconButton></EditorTab>
                <EditorTab $active>
                  <CupIcon /><span>memoryleak-1.0-SNAPSHOT-fat.jar (pid 49892)</span>
                  <IconButton aria-label="Close"><CloseIcon /></IconButton>
                </EditorTab>
                <EditorTools>
                  <Pair>
                    <NavButton $w={25} disabled aria-label="Back"><Svg width="4" height="7" viewBox="0 0 4 7"><path d="M4 0v7L0 3.500z" fill="#6d6d6d" /></Svg></NavButton>
                    <NavButton $w={25} disabled aria-label="Forward"><Svg width="4" height="7" viewBox="0 0 4 7"><path d="M0 0v7l4-3.500z" fill="#6d6d6d" /></Svg></NavButton>
                  </Pair>
                  <NavButton aria-label="Documents"><Svg width="5" height="4" viewBox="0 0 5 4"><path d="M0 0h5L2.500 4z" fill="#444" /></Svg></NavButton>
                  <NavButton aria-label="Maximize"><Svg width="13" height="9" viewBox="0 0 13 9"><path d="M.5 1h12v7.500H.5z" fill="none" stroke="#222" /><path d="M0 1h13" stroke="#222" strokeWidth="2" /></Svg></NavButton>
                </EditorTools>
              </EditorBar>
              <Document>
                <Views />
                <PageTitle><SpinnerIcon /><b>memoryleak-1.0-SNAPSHOT-fat.jar</b><span>(pid 49892)</span></PageTitle>
                <Body>
                  <SectionHeading>Heap Dump</SectionHeading>
                  <HeapToolbar />
                  <HeapTable />
                  <NameScroll><Thumb $w="63%" /></NameScroll>
                  <Crumbs>
                    <Crumb $big href="#dominators">Dominators</Crumb><ChevronIcon />
                    <Crumb href="#class"><ClassIcon />InfluxMeterRegistry</Crumb><PinIcon /><ChevronIcon />
                    <Crumb href="#instance"><IconSlot><InstanceIcon /></IconSlot>InfluxMeterRegistry#1</Crumb><PinIcon /><ChevronIcon />
                    <Crumb $big href="#fields">&lt;fields&gt;</Crumb><PinIcon /><ChevronIcon />
                    <Crumb href="#metermap"><IconSlot><FieldIcon size={13} /></IconSlot>meterMap</Crumb><PinIcon /><ChevronIcon />
                  </Crumbs>
                  <FilterBar>
                    <FilterLabel htmlFor="filter">Class Filter:</FilterLabel>
                    <Combo>
                      <ComboInput id="filter" />
                      <IconButton type="button" aria-label="History">
                        <Svg width="20" height="19" viewBox="0 0 20 19"><path d="M7 7.500L10 4.500 13 7.500M7 11.500l3 3 3-3" fill="none" stroke="#333" strokeWidth="1.400" /></Svg>
                      </IconButton>
                    </Combo>
                    <Spacer $w={6} />
                    <PushButton type="button" $w={25} aria-label="Filter type"><DownIcon /></PushButton>
                    <Spacer $w={11} />
                    <PushButton type="button" $w={65} $gap={5} disabled><FunnelIcon />Filter</PushButton>
                    <Spacer $w={10} />
                    <Dots $h={22} />
                    <Spacer $w={10} />
                    <PushButton type="button" $w={43} $gap={8} aria-label="Match type"><LinesIcon /><DownIcon /></PushButton>
                    <Spacer $w={7} />
                    <PushButton type="button" $w={31}><CaseMark>aA</CaseMark></PushButton>
                    <FilterClose type="button" aria-label="Close filter"><CloseIcon /></FilterClose>
                  </FilterBar>
                </Body>
              </Document>
            </Panel>
          </Main>
          <StatusBar />
        </WindowFrame>
        <Terminal>denied in a future release</Terminal>
        <EdgeMark width="4" height="12" viewBox="0 0 4 12"><path d="M4 1L1 6l3 5" fill="none" stroke="#a5a8aa" strokeWidth="2" /></EdgeMark>
      </Desktop>
    </>
  );
}
